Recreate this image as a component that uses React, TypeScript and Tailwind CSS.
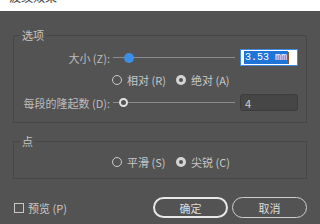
import React from 'react';

const font = { fontFamily: '"Noto Sans CJK SC", "Noto Sans", sans-serif' };

function Radio({ label, checked, width }: { label: string; checked?: boolean; width?: string }) {
  return (
    <div className={`flex items-center gap-[5px] ${width ?? ''}`}>
      {checked ? (
        <span className="w-[10px] h-[10px] rounded-full bg-[#d4d4d4] flex items-center justify-center">
          <span className="w-[4px] h-[4px] rounded-full bg-[#535353]" />
        </span>
      ) : (
        <span className="w-[10px] h-[10px] rounded-full border-[1.5px] border-[#cccccc]" />
      )}
      <span className="text-[11px] leading-[12px] text-[#c8c8c8]">{label}</span>
    </div>
  );
}

function SliderRow({
  label,
  knob,
  children,
}: {
  label: string;
  knob: React.ReactNode;
  children: React.ReactNode;
}) {
  return (
    <div className="flex items-center h-[17px]">
      <div className="w-[96px] text-right text-[11px] leading-[12px] text-[#bdbdbd] whitespace-nowrap">
        {label}
      </div>
      <div className="relative ml-[3px] w-[122px] h-[10px] flex items-center">
        <div className="w-full h-px bg-[#8c8c8c]" />
        {knob}
      </div>
      <div className="ml-[5px] w-[58px] h-[17px]">{children}</div>
    </div>
  );
}

export default function App() {
  return (
    <div className="w-[320px] h-[224px] bg-[#535353] overflow-hidden flex flex-col" style={font}>
      <div className="h-[11px] bg-white overflow-hidden shrink-0">
        <div className="-mt-[9px] pl-[9px] text-[12px] leading-[12px] text-[#444444]">波纹效果</div>
      </div>

      <div className="px-[13px] flex flex-col">
        <fieldset className="mt-[18px] border border-[#474747] rounded-[2px] pb-[11px]">
          <legend className="ml-[6px] px-[2px] text-[11px] leading-[12px] text-[#c4c4c4]">选项</legend>
          <div className="mt-[8px] flex flex-col gap-[8px]">
            <SliderRow
              label="大小 (Z):"
              knob={
                <span className="absolute left-[11px] top-0 w-[10px] h-[10px] rounded-full bg-[#3b8fe8]" />
              }
            >
              <div className="w-full h-full bg-white border border-[#3f8ae0] flex items-center pl-[3px]">
                <span
                  className="bg-[#1f74d8] text-white text-[10px] leading-[13px] px-[1px] whitespace-nowrap"
                  style={{ fontFamily: '"Liberation Mono", monospace' }}
                >
                  3.53 mm
                </span>
                <span className="w-px h-[12px] bg-[#8a5a2a]" />
              </div>
            </SliderRow>
            <div className="flex items-center h-[12px] pl-[98px]">
              <Radio label="相对 (R)" width="w-[64px]" />
              <Radio label="绝对 (A)" checked />
            </div>
            <SliderRow
              label="每段的隆起数 (D):"
              knob={
                <span className="absolute left-[6px] top-[0.5px] w-[9px] h-[9px] rounded-full border-2 border-[#e2e2e2] bg-[#535353]" />
              }
            >
              <div className="w-full h-full bg-[#464646] border border-[#3c3c3c] rounded-[3px] flex items-center pl-[4px] text-[11px] leading-[12px] text-[#d0d0d0]">
                4
              </div>
            </SliderRow>
          </div>
        </fieldset>

        <fieldset className="mt-[12px] border border-[#474747] rounded-[2px] pb-[10px]">
          <legend className="ml-[6px] px-[2px] text-[11px] leading-[12px] text-[#c4c4c4]">点</legend>
          <div className="mt-[9px] flex items-center h-[12px] pl-[98px]">
            <Radio label="平滑 (S)" width="w-[64px]" />
            <Radio label="尖锐 (C)" checked />
          </div>
        </fieldset>

        <div className="mt-[18px] flex items-center h-[21px]">
          <span className="ml-[1px] w-[10px] h-[10px] border border-[#c8c8c8]" />
          <span className="ml-[4px] text-[11px] leading-[12px] text-[#c8c8c8]">预览 (P)</span>
          <div className="ml-auto flex gap-[4px]">
            <button className="w-[75px] h-[21px] rounded-full border-2 border-[#e8e8e8] text-[11px] leading-[12px] text-[#dcdcdc]">
              确定
            </button>
            <button className="w-[75px] h-[21px] rounded-full border border-[#cfcfcf] text-[11px] leading-[12px] text-[#dcdcdc]">
              取消
            </button>
          </div>
        </div>
      </div>
    </div>
  );
}
